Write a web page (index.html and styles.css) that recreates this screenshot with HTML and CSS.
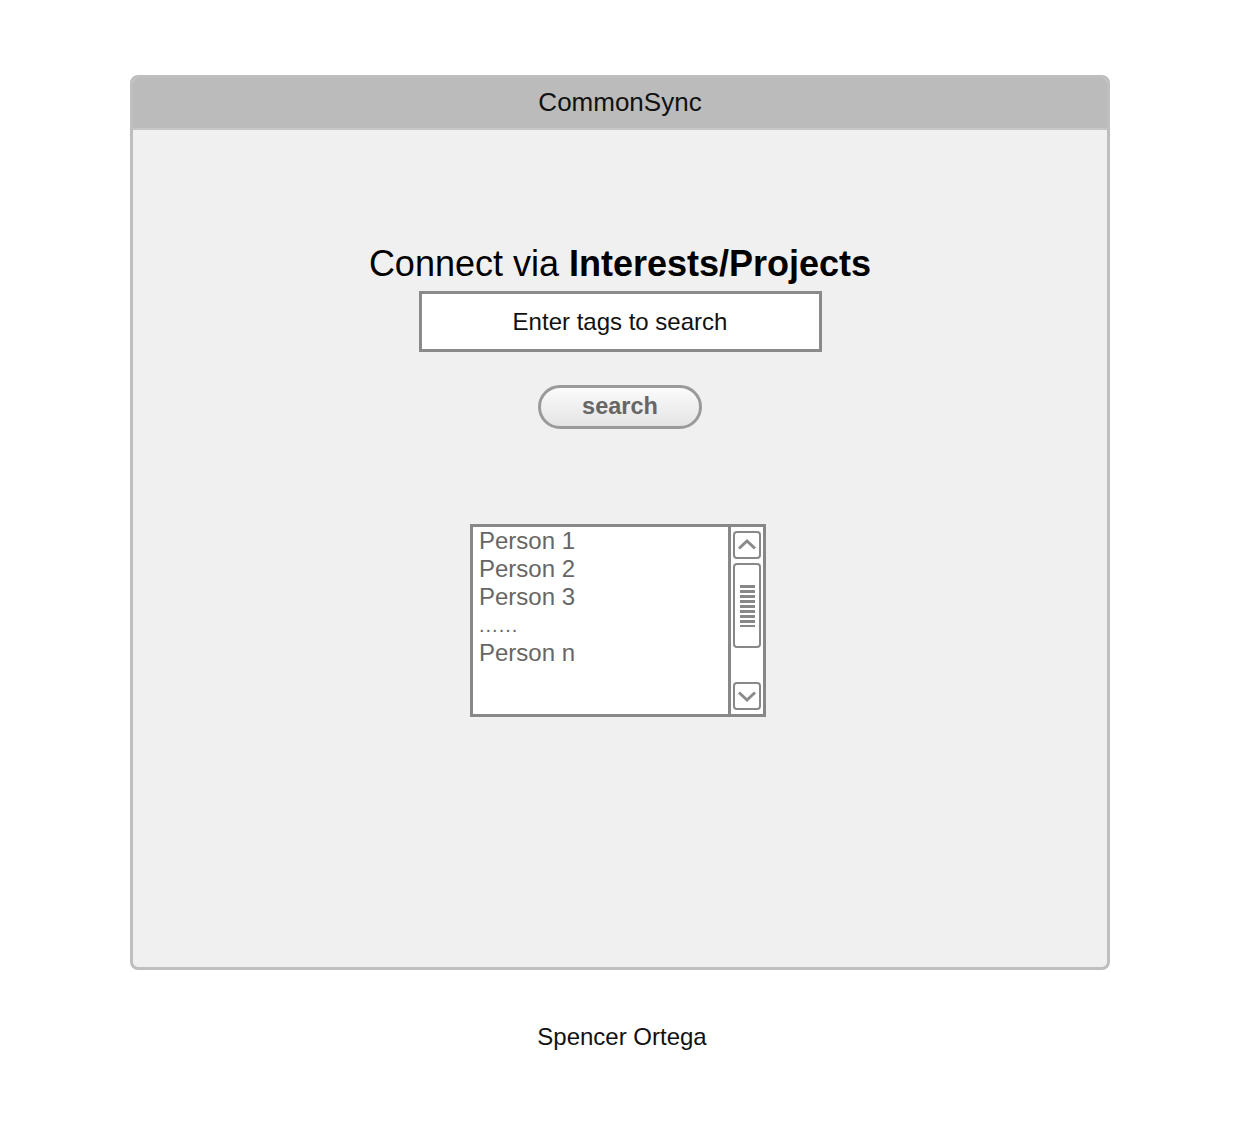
FILE: index.html
```html
<!DOCTYPE html>
<html>
<head>
<meta charset="utf-8">
<link rel="stylesheet" href="styles.css">
</head>
<body>
<div class="window">
  <div class="titlebar">CommonSync</div>
  <div class="content">
    <h1 class="heading">Connect via <b>Interests/Projects</b></h1>
    <div class="tags">Enter tags to search</div>
    <div class="btn">search</div>
    <div class="listbox">
      <div class="items">
        <div class="item">Person 1</div>
        <div class="item">Person 2</div>
        <div class="item">Person 3</div>
        <div class="item dots">......</div>
        <div class="item">Person n</div>
      </div>
      <div class="scroll">
        <div class="sbtn">
          <svg width="22" height="22" viewBox="0 0 22 22"><path d="M3 14.5 L11 7 L19 14.5" fill="none" stroke="#8a8a8a" stroke-width="3"/></svg>
        </div>
        <div class="thumb">
          <div class="grip"></div>
        </div>
        <div class="spacer"></div>
        <div class="sbtn">
          <svg width="22" height="22" viewBox="0 0 22 22"><path d="M3 7.5 L11 15 L19 7.5" fill="none" stroke="#8a8a8a" stroke-width="3"/></svg>
        </div>
      </div>
    </div>
  </div>
</div>
<div class="footer">Spencer Ortega</div>
</body>
</html>
```
FILE: styles.css
```css
html, body {
  margin: 0;
  padding: 0;
  background: #ffffff;
  font-family: "Liberation Sans", Arial, sans-serif;
}
.window {
  margin: 75px 0 0 130px;
  width: 974px;
  height: 889px;
  border: 3px solid #bfbfbf;
  border-radius: 8px;
  background: #f0f0f0;
  overflow: hidden;
  display: flex;
  flex-direction: column;
}
.titlebar {
  height: 49px;
  padding-bottom: 1px;
  background: #bbbbbb;
  border-bottom: 2px solid #c6c6c6;
  display: flex;
  align-items: center;
  justify-content: center;
  font-size: 26px;
  color: #111;
}
.content {
  display: flex;
  flex-direction: column;
  align-items: center;
  padding-top: 114px;
}
.heading {
  margin: 0;
  font-size: 36px;
  font-weight: normal;
  color: #000;
  line-height: 40px;
}
.heading b { font-weight: bold; }
.tags {
  margin-top: 7px;
  width: 397px;
  height: 55px;
  border: 3px solid #8a8a8a;
  background: #fff;
  display: flex;
  align-items: center;
  justify-content: center;
  font-size: 24px;
  color: #111;
}
.btn {
  margin-top: 33px;
  width: 158px;
  height: 38px;
  border: 3px solid #9a9a9a;
  border-radius: 22px;
  background: linear-gradient(#fbfbfb, #e4e4e4);
  display: flex;
  align-items: center;
  justify-content: center;
  font-size: 23.5px;
  font-weight: bold;
  color: #666;
  padding-bottom: 2px;
  box-sizing: content-box;
  height: 36px;
}
.listbox {
  margin-top: 95px;
  margin-right: 4px;
  width: 290px;
  height: 187px;
  border: 3px solid #888;
  background: #fff;
  display: flex;
}
.items {
  flex: 1;
  padding: 0 0 0 6px;
  border-right: 3px solid #888;
}
.item {
  font-size: 24px;
  line-height: 28px;
  color: #666;
}
.dots {
  font-size: 20px;
  letter-spacing: 1px;
}
.scroll {
  width: 32px;
  display: flex;
  flex-direction: column;
  align-items: center;
  padding: 4px 0;
}
.sbtn {
  width: 24px;
  height: 24px;
  border: 2px solid #888;
  border-radius: 4px;
  display: flex;
  align-items: center;
  justify-content: center;
  box-sizing: content-box;
}
.sbtn svg { display: block; }
.thumb {
  margin-top: 4px;
  width: 24px;
  height: 81px;
  border: 2px solid #888;
  border-radius: 4px;
  display: flex;
  align-items: center;
  justify-content: center;
}
.grip {
  width: 15px;
  height: 42px;
  background: repeating-linear-gradient(#888 0 3px, transparent 3px 5px);
}
.spacer { flex: 1; }
.footer {
  text-align: center;
  margin-top: 53px;
  font-size: 24px;
  color: #111;
}
```
